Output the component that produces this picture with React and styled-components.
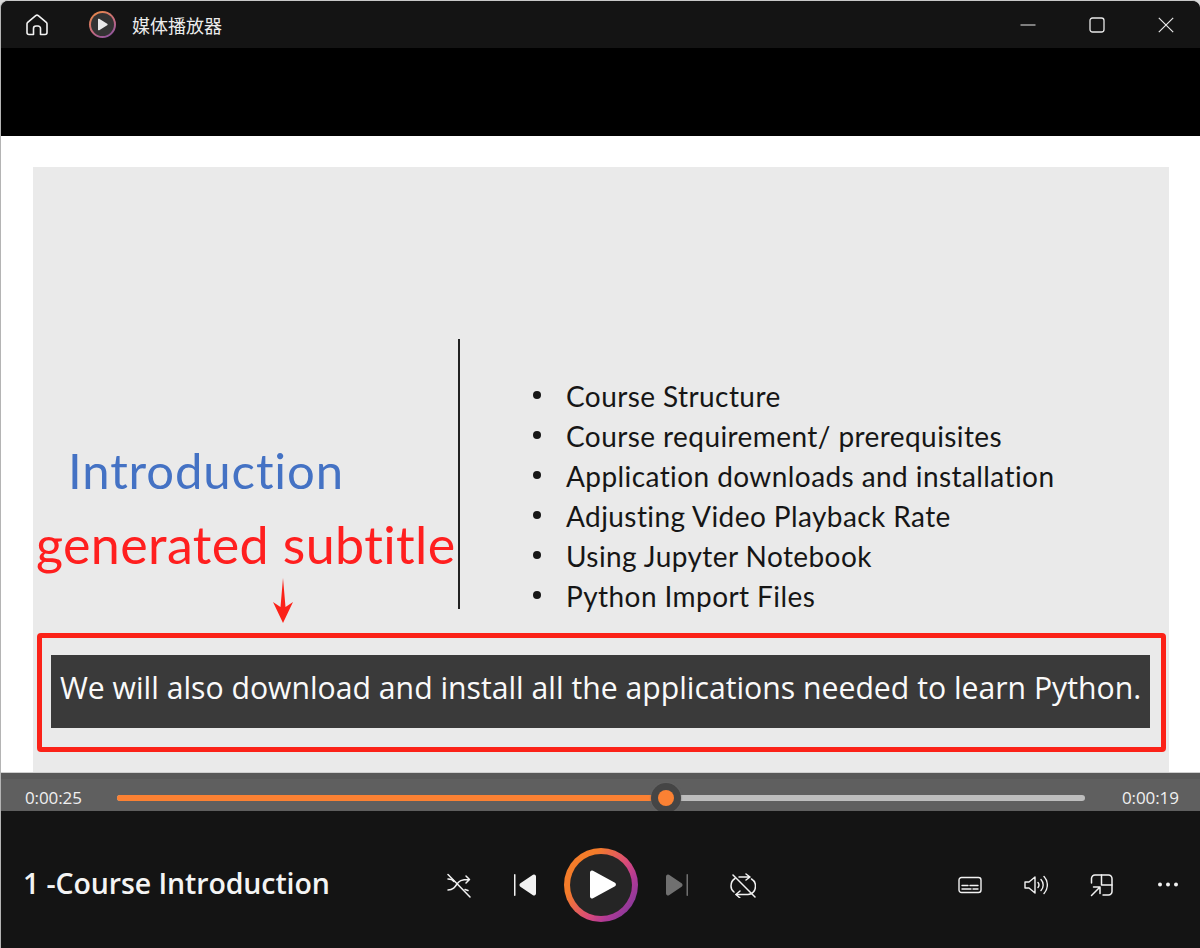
import React from "react";
import styled, { createGlobalStyle } from "styled-components";

const Global = createGlobalStyle`
  html, body { margin: 0; padding: 0; background: #d9d9d9; }
  body { font-family: "Open Sans", "Noto Sans CJK SC", sans-serif; }
  * { box-sizing: border-box; }
`;

const Window = styled.div`
  width: 1200px;
  height: 948px;
  display: flex;
  flex-direction: column;
  overflow: hidden;
  background: #141414;
  border-left: 1px solid #b4b4b4;
  border-top: 1px solid #c8c8c8;
  border-radius: 8px 8px 0 0;
`;

const TitleBar = styled.header`
  height: 47px;
  flex: none;
  display: flex;
  align-items: center;
  padding-left: 24px;
  background: #141414;
  color: #f2f2f2;
`;

const AppTitle = styled.span`
  margin-left: 16px;
  font: 18px/24px "Noto Sans CJK SC", sans-serif;
  color: #ececec;
`;

const AppLogo = styled.div`
  width: 27px;
  height: 27px;
  margin-left: 40px;
  border-radius: 50%;
  padding: 2px;
  background: linear-gradient(150deg, #e8874a 10%, #c46a80 55%, #7c4ea8 100%);
  & > div {
    width: 100%;
    height: 100%;
    border-radius: 50%;
    background: #333;
    display: flex;
    align-items: center;
    justify-content: center;
  }
`;

const WindowButtons = styled.div`
  margin-left: auto;
  display: flex;
  align-items: center;
`;

const WindowButton = styled.div`
  width: 69px;
  height: 47px;
  display: flex;
  align-items: center;
  justify-content: center;
  color: #e8e8e8;
`;

const Letterbox = styled.div`
  height: 88px;
  flex: none;
  background: #000;
`;

const Video = styled.main`
  position: relative;
  flex: none;
  height: 636px;
  background: #fff;
  padding: 31px 31px 0 32px;
  overflow: hidden;
`;

const Slide = styled.section`
  height: 640px;
  background: #eaeaea;
  display: flex;
  padding: 172px 0 0 0;
`;

const SlideLeft = styled.div`
  width: 427px;
  height: 270px;
  flex: none;
  border-right: 2px solid #222;
  padding: 103px 0 0 35px;
`;

const SlideHeading = styled.h1`
  margin: 0;
  font: 400 49px/56px Lato, sans-serif;
  font-variant-ligatures: none;
  letter-spacing: 0.9px;
  color: #4472c4;
`;

const Bullets = styled.ul`
  margin: 37px 0 0 74px;
  padding: 0 0 0 32px;
  list-style: none;
  font: 400 28px/40px Lato, sans-serif;
  font-variant-ligatures: none;
  color: #161616;
  letter-spacing: 0.42px;
  white-space: nowrap;
`;

const Bullet = styled.li`
  position: relative;
  &::before {
    content: "";
    position: absolute;
    left: -33px;
    top: 15px;
    width: 8px;
    height: 8px;
    border-radius: 50%;
    background: #161616;
  }
`;

const Annotation = styled.div`
  position: absolute;
  left: 35px;
  top: 373px;
  font: 400 52px/70px Lato, sans-serif;
  font-variant-ligatures: none;
  color: #ff1f1f;
  white-space: nowrap;
  letter-spacing: 0.38px;
`;

const Arrow = styled.svg`
  position: absolute;
  left: 272px;
  top: 442px;
`;

const RedBox = styled.div`
  position: absolute;
  left: 36px;
  top: 497px;
  width: 1129px;
  height: 119px;
  border: 5px solid #fb2218;
  border-radius: 4px;
  padding: 17px 11px 0 9px;
`;

const Subtitle = styled.div`
  height: 73px;
  background: #3a3a3a;
  color: #fafafa;
  font: 400 30.2px/66px "Open Sans", sans-serif;
  text-align: center;
  white-space: nowrap;
`;

const Scrubber = styled.div`
  height: 39px;
  flex: none;
  background: linear-gradient(#585858 0 6px, #5f5f5f 6px);
  border-top: 1px solid #cfcfcf;
  display: flex;
  align-items: center;
  padding: 11px 23px 0 24px;
  color: #f0f0f0;
  position: relative;
`;

const Time = styled.span`
  width: 92px;
  flex: none;
  font: 17px/20px "Open Sans", sans-serif;
  letter-spacing: -0.1px;
  &:last-child { width: auto; margin-left: 37px; }
`;

const Track = styled.div`
  position: relative;
  width: 968px;
  height: 6px;
  flex: none;
  border-radius: 3px;
  background: #bdbdbd;
`;

const Progress = styled.div`
  height: 100%;
  border-radius: 3px;
  background: #fb8133;
`;

const Thumb = styled.div`
  position: absolute;
  top: -12px;
  width: 30px;
  height: 30px;
  margin-left: -15px;
  border-radius: 50%;
  background: #454545;
  box-shadow: 0 0 2px #6b6b6b;
  display: flex;
  align-items: center;
  justify-content: center;
  &::after {
    content: "";
    width: 16px;
    height: 16px;
    border-radius: 50%;
    background: #fb8133;
  }
`;

const Footer = styled.footer`
  flex: 1;
  display: flex;
  align-items: center;
  position: relative;
  padding: 10px 0 0 22px;
  background: #141414;
`;

const TrackTitle = styled.div`
  width: 421px;
  flex: none;
  margin-top: -4px;
  font: 600 28.5px/40px "Open Sans", sans-serif;
  color: #f4f4f4;
  letter-spacing: -0.1px;
  white-space: nowrap;
`;

const Transport = styled.div`
  display: flex;
  align-items: center;
  gap: 36px;
  flex: none;
  color: #f4f4f4;
`;

const IconSlot = styled.div`
  width: 30px;
  height: 30px;
  display: flex;
  align-items: center;
  justify-content: center;
  color: ${(p) => (p.$dim ? "#707070" : "#f2f2f2")};
`;

const PlayRing = styled.div`
  width: 74px;
  height: 74px;
  margin: 0 -12px;
  border-radius: 50%;
  padding: 6px;
  background: linear-gradient(125deg, #f47c2a 28%, #d84a7a 58%, #b23a96 72%, #77399e 95%);
  & > div {
    width: 100%;
    height: 100%;
    border-radius: 50%;
    background: #252525;
    display: flex;
    align-items: center;
    justify-content: center;
    padding-left: 3px;
  }
`;

const Side = styled.div`
  margin-left: auto;
  display: flex;
  align-items: center;
  padding-right: 17px;
  gap: 36px;
  color: #f0f0f0;
`;

const Stroke = ({ w = 24, h = 24, sw = 1.5, children }) => (
  <svg width={w} height={h} viewBox={`0 0 ${w} ${h}`} fill="none" stroke="currentColor" strokeWidth={sw} strokeLinecap="round" strokeLinejoin="round">
    {children}
  </svg>
);

const topics = [
  "Course Structure",
  "Course requirement/ prerequisites",
  "Application downloads and installation",
  "Adjusting Video Playback Rate",
  "Using Jupyter Notebook",
  "Python Import Files",
];

export default function App() {
  return (
    <>
      <Global />
      <Window>
        <TitleBar>
          <Stroke w={24} h={24} sw={1.6}>
            <path d="M2 19.500V10.800a2 2 0 0 1 .7-1.500l8-6.600a2 2 0 0 1 2.600 0l8 6.600a2 2 0 0 1 .7 1.500v8.700a2 2 0 0 1-2 2h-4.500v-6a2.500 2.500 0 0 0-2.500-2.500h-2a2.500 2.500 0 0 0-2.500 2.500v6H4a2 2 0 0 1-2-2z" />
          </Stroke>
          <AppLogo>
            <div>
              <svg width="11" height="13" viewBox="0 0 11 13"><path d="M1 1.500v10a.8.8 0 0 0 1.200.7l8-5a.8.8 0 0 0 0-1.400l-8-5A.8.8 0 0 0 1 1.500z" fill="#e8e8e8" /></svg>
            </div>
          </AppLogo>
          <AppTitle>媒体播放器</AppTitle>
          <WindowButtons>
            <WindowButton>
              <svg width="16" height="16" viewBox="0 0 16 16"><path d="M.5 8h15" stroke="currentColor" strokeWidth="1.200" /></svg>
            </WindowButton>
            <WindowButton>
              <svg width="16" height="16" viewBox="0 0 16 16"><rect x="1" y="1" width="14" height="14" rx="2.500" fill="none" stroke="currentColor" strokeWidth="1.300" /></svg>
            </WindowButton>
            <WindowButton>
              <svg width="16" height="16" viewBox="0 0 16 16"><path d="M.8.8l14.400 14.400M15.200.8L.8 15.200" stroke="currentColor" strokeWidth="1.200" /></svg>
            </WindowButton>
          </WindowButtons>
        </TitleBar>
        <Letterbox />
        <Video>
          <Slide>
            <SlideLeft>
              <SlideHeading>Introduction</SlideHeading>
            </SlideLeft>
            <Bullets>
              {topics.map((t) => (
                <Bullet key={t}>{t}</Bullet>
              ))}
            </Bullets>
          </Slide>
          <Annotation>generated subtitle</Annotation>
          <Arrow width="20" height="46" viewBox="0 0 20 46">
            <path d="M10 0 L12.500 29 L20 24 L10 45 L0 24 L7.500 29 Z" fill="#fb2218" />
          </Arrow>
          <RedBox>
            <Subtitle>We will also download and install all the applications needed to learn Python.</Subtitle>
          </RedBox>
        </Video>
        <Scrubber>
          <Time>0:00:25</Time>
          <Track>
            <Progress style={{ width: "56.7%" }} />
            <Thumb style={{ left: "56.7%" }} />
          </Track>
          <Time>0:00:19</Time>
        </Scrubber>
        <Footer>
          <TrackTitle>1 -Course Introduction</TrackTitle>
          <Transport>
            <IconSlot>
              <Stroke w={26} h={26} sw={1.5}>
                <path d="M2 2.500l22 22.500" />
                <path d="M2 18c5 0 7-3 9-6s4-4.500 12-4.500M20 4l3.500 3.500L20 11" />
                <path d="M2 7c3 0 5 1 6 2.500M19 17.500l3 1" />
              </Stroke>
            </IconSlot>
            <IconSlot>
              <svg width="22" height="22" viewBox="0 0 22 22" fill="currentColor">
                <rect x="0" y="0" width="1.500" height="22" rx=".7" />
                <path d="M22 2.500v17a2 2 0 0 1-3 1.700L6.400 12.700a2 2 0 0 1 0-3.400L19 .8a2 2 0 0 1 3 1.700z" />
              </svg>
            </IconSlot>
            <PlayRing>
              <div>
                <svg width="28" height="29" viewBox="0 0 28 29"><path d="M1 2.500v24a2 2 0 0 0 3 1.700l22-12a2 2 0 0 0 0-3.400L4 .8A2 2 0 0 0 1 2.500z" fill="#fff" /></svg>
              </div>
            </PlayRing>
            <IconSlot $dim>
              <svg width="22" height="22" viewBox="0 0 22 22" fill="currentColor">
                <rect x="20.500" y="0" width="1.500" height="22" rx=".7" />
                <path d="M0 2.500v17a2 2 0 0 0 3 1.700l12.600-8.500a2 2 0 0 0 0-3.400L3 .8a2 2 0 0 0-3 1.700z" />
              </svg>
            </IconSlot>
            <IconSlot>
              <Stroke w={26} h={26} sw={1.5}>
                <path d="M3 3l22 22" />
                <path d="M5 6.500C2.500 8 1 11 1 14c0 3 1.500 5 3 6M21.500 7c2.500 1.500 4 4 4 7 0 4-2.500 8.500-7.500 8.500H6" />
                <path d="M9 5h11M16 2l4 3-4 3M10 19l-4 3.500 4 3.500" />
              </Stroke>
            </IconSlot>
          </Transport>
          <Side>
            <IconSlot>
              <Stroke w={24} h={18} sw={1.4}>
                <rect x="1" y="1.500" width="22" height="15" rx="2.500" />
                <path d="M4 9.500h6M12 9.500h8M4 13h9M15 13h5" />
              </Stroke>
            </IconSlot>
            <IconSlot>
              <Stroke w={24} h={22} sw={1.4}>
                <path d="M1 8v6h4l6 5V3L5 8z" />
                <path d="M14 8.500a4 4 0 0 1 0 5M17 5.500a8 8 0 0 1 0 11M20 2.500a12.500 12.500 0 0 1 0 17" />
              </Stroke>
            </IconSlot>
            <IconSlot>
              <Stroke w={24} h={24} sw={1.5}>
                <path d="M1.500 10V5.500A3.500 3.500 0 0 1 5 2h13.500A3.500 3.500 0 0 1 22 5.500v13a3.500 3.500 0 0 1-3.500 3.500H13" />
                <path d="M11.500 2v10H22" />
                <path d="M1.500 22.500L10 14M3.500 14H10v6.500" />
              </Stroke>
            </IconSlot>
            <IconSlot>
              <svg width="20" height="5" viewBox="0 0 20 5" fill="currentColor"><circle cx="2" cy="2.500" r="2" /><circle cx="10" cy="2.500" r="2" /><circle cx="18" cy="2.500" r="2" /></svg>
            </IconSlot>
          </Side>
        </Footer>
      </Window>
    </>
  );
}
